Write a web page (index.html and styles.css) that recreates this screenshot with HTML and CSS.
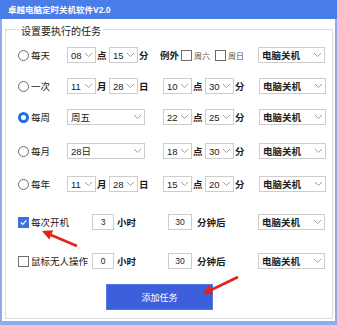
FILE: index.html
```html
<!DOCTYPE html>
<html>
<head>
    <title>卓越电脑定时关机软件V2.0</title>
    <link rel="stylesheet" href="styles.css">
</head>
<body>
    <div class="window">
        <div class="titlebar">卓越电脑定时关机软件V2.0</div>
        <div class="content">
            <fieldset class="group">
                <legend>设置要执行的任务</legend>

                <!-- 每天 -->
                <div class="row first">
                    <div class="opt"><span class="radio"></span>每天</div>
                    <div class="sel sm"><span>08</span><svg viewBox="0 0 7 4"><polyline points="0,0 3.5,3.5 7,0"/></svg></div>
                    <span class="unit">点</span>
                    <div class="sel sm"><span>15</span><svg viewBox="0 0 7 4"><polyline points="0,0 3.5,3.5 7,0"/></svg></div>
                    <span class="unit">分</span>
                    <span class="except">例外</span>
                    <span class="box"></span><span class="day">周六</span>
                    <span class="box"></span><span class="day last">周日</span>
                    <div class="sel act"><span>电脑关机</span><svg viewBox="0 0 7 4"><polyline points="0,0 3.5,3.5 7,0"/></svg></div>
                </div>

                <!-- 一次 -->
                <div class="row">
                    <div class="opt"><span class="radio"></span>一次</div>
                    <div class="part">
                        <div class="sel sm"><span>11</span><svg viewBox="0 0 7 4"><polyline points="0,0 3.5,3.5 7,0"/></svg></div>
                        <span class="unit">月</span>
                        <div class="sel sm"><span>28</span><svg viewBox="0 0 7 4"><polyline points="0,0 3.5,3.5 7,0"/></svg></div>
                        <span class="unit">日</span>
                    </div>
                    <div class="part">
                        <div class="sel sm"><span>10</span><svg viewBox="0 0 7 4"><polyline points="0,0 3.5,3.5 7,0"/></svg></div>
                        <span class="unit">点</span>
                        <div class="sel sm"><span>30</span><svg viewBox="0 0 7 4"><polyline points="0,0 3.5,3.5 7,0"/></svg></div>
                        <span class="unit">分</span>
                    </div>
                    <div class="sel act"><span>电脑关机</span><svg viewBox="0 0 7 4"><polyline points="0,0 3.5,3.5 7,0"/></svg></div>
                </div>

                <!-- 每周 -->
                <div class="row">
                    <div class="opt"><span class="radio on"></span>每周</div>
                    <div class="part">
                        <div class="sel md"><span>周五</span><svg viewBox="0 0 7 4"><polyline points="0,0 3.5,3.5 7,0"/></svg></div>
                    </div>
                    <div class="part">
                        <div class="sel sm"><span>22</span><svg viewBox="0 0 7 4"><polyline points="0,0 3.5,3.5 7,0"/></svg></div>
                        <span class="unit">点</span>
                        <div class="sel sm"><span>25</span><svg viewBox="0 0 7 4"><polyline points="0,0 3.5,3.5 7,0"/></svg></div>
                        <span class="unit">分</span>
                    </div>
                    <div class="sel act"><span>电脑关机</span><svg viewBox="0 0 7 4"><polyline points="0,0 3.5,3.5 7,0"/></svg></div>
                </div>

                <!-- 每月 -->
                <div class="row gap-md">
                    <div class="opt"><span class="radio"></span>每月</div>
                    <div class="part">
                        <div class="sel md"><span>28日</span><svg viewBox="0 0 7 4"><polyline points="0,0 3.5,3.5 7,0"/></svg></div>
                    </div>
                    <div class="part">
                        <div class="sel sm"><span>18</span><svg viewBox="0 0 7 4"><polyline points="0,0 3.5,3.5 7,0"/></svg></div>
                        <span class="unit">点</span>
                        <div class="sel sm"><span>30</span><svg viewBox="0 0 7 4"><polyline points="0,0 3.5,3.5 7,0"/></svg></div>
                        <span class="unit">分</span>
                    </div>
                    <div class="sel act"><span>电脑关机</span><svg viewBox="0 0 7 4"><polyline points="0,0 3.5,3.5 7,0"/></svg></div>
                </div>

                <!-- 每年 -->
                <div class="row gap-md2">
                    <div class="opt"><span class="radio"></span>每年</div>
                    <div class="part">
                        <div class="sel sm"><span>11</span><svg viewBox="0 0 7 4"><polyline points="0,0 3.5,3.5 7,0"/></svg></div>
                        <span class="unit">月</span>
                        <div class="sel sm"><span>28</span><svg viewBox="0 0 7 4"><polyline points="0,0 3.5,3.5 7,0"/></svg></div>
                        <span class="unit">日</span>
                    </div>
                    <div class="part">
                        <div class="sel sm"><span>15</span><svg viewBox="0 0 7 4"><polyline points="0,0 3.5,3.5 7,0"/></svg></div>
                        <span class="unit">点</span>
                        <div class="sel sm"><span>20</span><svg viewBox="0 0 7 4"><polyline points="0,0 3.5,3.5 7,0"/></svg></div>
                        <span class="unit">分</span>
                    </div>
                    <div class="sel act"><span>电脑关机</span><svg viewBox="0 0 7 4"><polyline points="0,0 3.5,3.5 7,0"/></svg></div>
                </div>

                <!-- 每次开机 -->
                <div class="row gap-lg">
                    <div class="opt wide"><span class="box on"><svg viewBox="0 0 10 10"><polyline points="2,5 4.2,7.2 8.2,2.6"/></svg></span>每次开机</div>
                    <div class="num">3</div>
                    <span class="unit hour">小时</span>
                    <div class="num mid">30</div>
                    <span class="unit after">分钟后</span>
                    <div class="sel act"><span>电脑关机</span><svg viewBox="0 0 7 4"><polyline points="0,0 3.5,3.5 7,0"/></svg></div>
                </div>

                <!-- 鼠标无人操作 -->
                <div class="row gap-xl">
                    <div class="opt wide"><span class="box"></span>鼠标无人操作</div>
                    <div class="num">0</div>
                    <span class="unit hour">小时</span>
                    <div class="num mid">30</div>
                    <span class="unit after">分钟后</span>
                    <div class="sel act"><span>电脑关机</span><svg viewBox="0 0 7 4"><polyline points="0,0 3.5,3.5 7,0"/></svg></div>
                </div>

                <button class="add-btn">添加任务</button>
            </fieldset>
        </div>

        <!-- red hint arrows drawn over the form -->
        <svg class="arrows" width="337" height="325" viewBox="0 0 337 325">
            <line x1="77" y1="246" x2="51" y2="235"/>
            <polygon points="42,231 53.2,230.3 49.3,239.5"/>
            <line x1="238" y1="277" x2="211" y2="290"/>
            <polygon points="202,294 213.1,294.2 208.9,285.2"/>
        </svg>
    </div>
</body>
</html>
```

FILE: styles.css
```css
body {
    margin: 0;
    font-family: "Liberation Sans", "Noto Sans CJK SC", sans-serif;
    font-size: 9.5px;
    color: #1a1a1a;
    background: #fff;
}

.window {
    position: relative;
    width: 337px;
    height: 325px;
    box-sizing: border-box;
    border: solid #8eaaf2;
    border-width: 0 2px 4px 2px;
    background: #fff;
}

.titlebar {
    height: 19px;
    margin: 0 -2px;
    padding-left: 8px;
    line-height: 20px;
    background: #4b7de9;
    color: #fff;
    font-size: 8.5px;
    font-weight: bold;
}

.content {
    padding: 1px 2px 0 3px;
}

.group {
    margin: 0;
    padding: 9px 6px 8px 12px;
    border: 1px solid #dcdcdc;
}

.group legend {
    padding: 6px 2px 0 2px;
    margin-left: 1px;
    line-height: 12px;
    font-size: 10px;
    color: #222;
}

.row {
    display: flex;
    align-items: center;
    height: 16px;
    margin-top: 15px;
}

.row.first { margin-top: 0; }
.row.gap-md { margin-top: 18px; }
.row.gap-md2 { margin-top: 17px; }
.row.gap-lg { margin-top: 22px; }
.row.gap-xl { margin-top: 23px; }

.opt {
    width: 49px;
    display: flex;
    align-items: center;
}

.opt.wide {
    width: 74px;
}

.radio {
    width: 9px;
    height: 9px;
    border: 1px solid #6e6e6e;
    border-radius: 50%;
    margin-right: 2px;
    background: #fff;
}

.radio.on {
    width: 5px;
    height: 5px;
    border: 3px solid #1f6fe5;
}

.box {
    width: 9px;
    height: 9px;
    border: 1px solid #6e6e6e;
    background: #fff;
    margin-right: 2px;
    display: flex;
}

.box.on {
    background: #3a72e0;
    border-color: #3a72e0;
}

.box svg {
    width: 9px;
    height: 9px;
    fill: none;
    stroke: #fff;
    stroke-width: 1.3;
}

.part {
    width: 96px;
    display: flex;
    align-items: center;
}

.sel {
    height: 16px;
    box-sizing: border-box;
    border: 1px solid #cdcdcd;
    background: #fff;
    display: flex;
    align-items: center;
    justify-content: space-between;
    padding: 0 3px 0 3px;
}

.sel svg {
    width: 7px;
    height: 4px;
    fill: none;
    stroke: #888;
    stroke-width: 0.8;
}

.sel.sm { width: 29px; }
.sel.md { width: 78px; }

.sel.act {
    width: 67px;
    font-weight: bold;
    font-size: 9.5px;
    color: #222;
}

.unit {
    width: 13px;
    padding-left: 1px;
    box-sizing: border-box;
    font-weight: bold;
}

.except {
    margin-left: 9px;
    width: 21px;
    font-weight: bold;
}

.day {
    width: 21px;
    font-size: 8px;
    color: #555;
}

.day.last {
    width: 30px;
}

.num {
    width: 22px;
    height: 16px;
    box-sizing: border-box;
    border: 1px solid #cdcdcd;
    text-align: center;
    line-height: 14px;
    font-size: 8.5px;
}

.num.mid {
    width: 24px;
}

.unit.hour {
    width: 54px;
    padding-left: 3px;
}

.unit.after {
    width: 66px;
    padding-left: 5px;
}

.add-btn {
    display: block;
    margin: 15px 0 0 88px;
    width: 107px;
    height: 26px;
    border: 1px solid #5677e6;
    background: #3d5fdc;
    color: #fff;
    font-family: inherit;
    font-size: 9px;
}

.arrows {
    position: absolute;
    left: -2px;
    top: 0;
    pointer-events: none;
}

.arrows line {
    stroke: #e2231a;
    stroke-width: 2.6;
}

.arrows polygon {
    fill: #e2231a;
}
```
